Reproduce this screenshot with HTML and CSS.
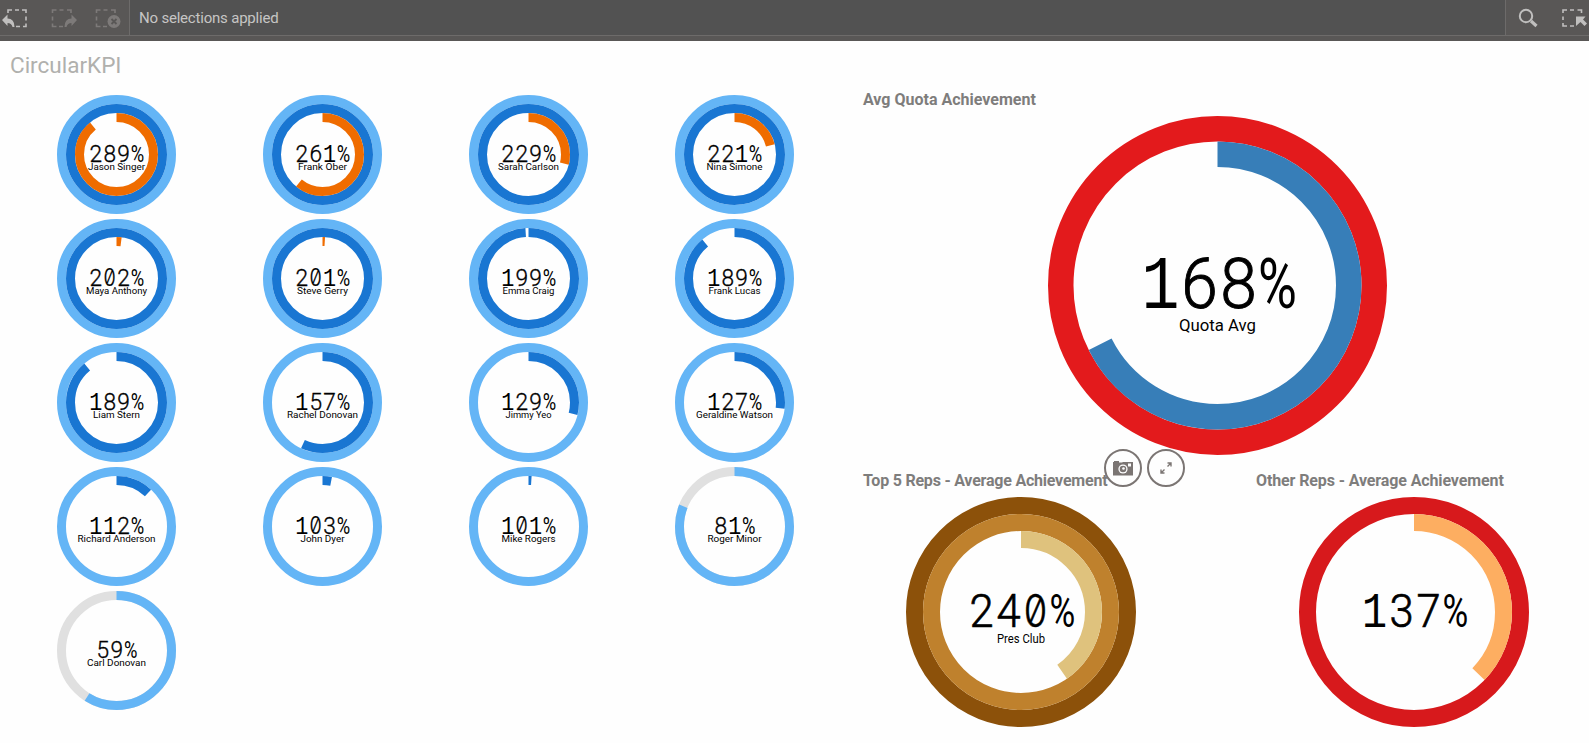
FILE: index.html
```html
<!DOCTYPE html>
<html lang="en">
<head>
<meta charset="utf-8">
<title>CircularKPI</title>
<link rel="stylesheet" href="styles.css">
</head>
<body>
<header class="toolbar">
  <div class="tools tools-left">
    <svg class="tool back" width="26" height="22" viewBox="0 0 26 22"><path class="dash" d="M6 5V2h4M13 2h4M20 2h4v3M24 8.500v4M24 15.500v3h-3M18 18.500h-4"/><path class="fill" d="M0 12l5.500-5.500v4q7 0 7 8.500h-2q-1-4-5-4v3z"/></svg>
    <svg class="tool dim" width="26" height="22" viewBox="0 0 26 22"><path class="dash" d="M1.500 5V2h4M8.500 2h4M16 2h4v3M1.500 8.500v4M1.500 15.500v3h4M8 18.500h4"/><path class="fill" d="M26 12l-5.500-5.500v4q-7 0-7 8.500h2q1-4 5-4v3z"/></svg>
    <svg class="tool dim" width="26" height="22" viewBox="0 0 26 22"><path class="dash" d="M1.500 5V2h4M8.500 2h4M16 2h4v3M1.500 8.500v4M1.500 15.500v3h4M8 18.500h4"/><circle class="fill" cx="19" cy="13.500" r="6.500"/><path class="cross" d="M16.500 11l5 5M21.500 11l-5 5"/></svg>
  </div>
  <div class="selections">No selections applied</div>
  <div class="tools tools-right">
    <svg class="tool" width="20" height="20" viewBox="0 0 20 20"><circle class="lens" cx="8" cy="8" r="6.2"/><path class="handle" d="M13 13l5.5 5"/></svg>
    <svg class="tool" width="25" height="20" viewBox="0 0 25 20"><path class="dash" d="M1 5V2h4M8 2h4M15.500 2h4v3M1 8.500v3.500M1 15v3h4M8 18h4"/><path class="fill" d="M14 8.500h9.500l-2.500 3 4 4-2.500 2.500-4-4-4.500 4z"/></svg>
  </div>
</header>
<h1 class="sheet-title">CircularKPI</h1>
<main class="sheet">
  <section class="reps" id="reps"></section>
  <section class="summary">
    <article class="panel panel-wide"><h2>Avg Quota Achievement</h2><div class="chart" id="avg"></div></article>
    <div class="pair">
      <article class="panel"><h2 class="t-top">Top 5 Reps - Average Achievement</h2><div class="chart" id="top"></div></article>
      <article class="panel"><h2 class="t-other">Other Reps - Average Achievement</h2><div class="chart" id="other"></div></article>
    </div>
    <div class="actions">
      <span class="action"><svg width="20" height="15" viewBox="0 0 20 15"><path class="cam" fill-rule="evenodd" d="M0 1h1V0h5v1.500h3l1-.5h10v13.500H0zM15 2.500v3h3v-3z"/><circle cx="10" cy="8" r="4.600" fill="#fff"/><circle class="cam" cx="10" cy="8" r="3.300"/><circle cx="10.500" cy="7.500" r="1.300" fill="#fff"/></svg></span>
      <span class="action"><svg width="12" height="12" viewBox="0 0 12 12"><path class="arrows" d="M7.500 1H11v3.500M11 1L7.500 4.500M4.500 11H1V7.500M1 11l3.500-3.500"/></svg></span>
    </div>
  </section>
</main>
<script src="kpi.js"></script>
</body>
</html>
```
FILE: styles.css
```css
* { box-sizing: border-box; }
body { margin: 0; width: 1589px; height: 743px; overflow: hidden; background: #fefefe; font-family: Roboto, "Liberation Sans", sans-serif; }
.toolbar { display: flex; height: 41px; background: #595756; border-bottom: 5px solid #595756; }
.tools { display: flex; border-bottom: 1px solid #6d6b6a; }
.tools-left { width: 130px; padding: 8px 0 0 2px; gap: 18px; border-right: 1px solid #6d6b6a; }
.tools-right { width: 84px; padding: 8px 0 0 12px; gap: 24px; border-left: 1px solid #6d6b6a; }
.tool { flex: none; }
.back { margin-right: 4.5px; }
.selections { flex: 1; padding: 9px 0 0 9px; font-size: 15px; line-height: 18px; letter-spacing: -0.2px; color: #c6c5c4; background: #525252; border-bottom: 1px solid #6d6b6a; }
.dash { fill: none; stroke: #c0bfbe; stroke-width: 1.6; }
.fill { fill: #c0bfbe; }
.dim .dash { stroke: #7d7a79; }
.dim .fill { fill: #7d7a79; }
.cross { stroke: #595756; stroke-width: 1.8; }
.lens { fill: none; stroke: #c0bfbe; stroke-width: 2; }
.handle { stroke: #c0bfbe; stroke-width: 3.2; }
.sheet-title { margin: 0; height: 54px; padding: 11px 0 0 10px; font-size: 22.5px; line-height: 27px; font-weight: 400; color: #b0b0ad; }
.sheet { display: flex; }
.reps { display: grid; grid-template-columns: repeat(4, 206px); grid-auto-rows: 119px; row-gap: 5px; padding-left: 13.5px; width: 863px; align-content: start; justify-items: center; }
.summary { position: relative; width: 709px; }
.panel h2 { margin: 0; height: 26px; font-size: 16px; line-height: 19px; font-weight: 700; color: #7e7d7c; white-space: nowrap; }
.panel-wide h2 { margin-top: -5px; }
.chart { display: flex; justify-content: center; }
.pair { display: grid; grid-template-columns: 316px 316px; column-gap: 77px; padding-top: 16px; }
.pair .t-top { letter-spacing: -0.22px; }
.pair .t-other { letter-spacing: -0.12px; }
svg { display: block; }
.kpi text { text-anchor: middle; fill: #000; }
.digit { font-weight: 300; stroke: #000; stroke-width: 0.014em; }
.percent { font-weight: 400; }
.one { font-family: "Liberation Mono", monospace; }
.zero { font-family: Inter, sans-serif; font-feature-settings: "zero"; font-weight: 300; stroke: #000; stroke-width: 0.01em; }
.actions { position: absolute; left: 241px; top: 354px; display: flex; gap: 5px; }
.action { width: 38px; height: 38px; border: 2px solid #7b7573; border-radius: 50%; display: flex; align-items: center; justify-content: center; }
.cam { fill: #7b7573; }
.arrows { fill: none; stroke: #7b7573; stroke-width: 1.4; }
```
FILE: kpi.js
```js
const blues = ['#64b5f6', '#1976d2', '#ef6c00'];

// Font class, size factor and horizontal scale for each kind of character.
function glyph(ch) {
  if (ch === '1') return ['one', 1.06, 0.84];
  if (ch === '0') return ['zero', 0.965, 0.84];
  if (ch === '%') return ['percent', 0.985, 0.76];
  return ['digit', 0.985, 0.94];
}

// Concentric rings: each full turn is 100 percent.
function kpi(value, label, o) {
  const c = o.size / 2;
  let out = '';
  o.colors.forEach((color, i) => {
    const r = c - o.ring * (i + 0.5);
    const part = Math.min(100, value - i * 100);
    if (i === 0 && part < 100) out += `<circle cx="${c}" cy="${c}" r="${r}" fill="none" stroke="#e0e0e0" stroke-width="${o.ring}"/>`;
    if (part <= 0) return;
    const dash = part < 100 ? `pathLength="100" stroke-dasharray="${part} 100" transform="rotate(-90 ${c} ${c})"` : '';
    out += `<circle cx="${c}" cy="${c}" r="${r}" fill="none" stroke="${color}" stroke-width="${o.ring}" ${dash}/>`;
  });
  const chars = [...(Math.round(value) + '%')];
  chars.forEach((ch, i) => {
    const x = c + o.shift + (i - (chars.length - 1) / 2) * o.advance;
    const [cls, size, scale] = glyph(ch);
    out += `<text class="${cls}" font-size="${o.font * size}" transform="translate(${x} ${o.valueY}) scale(${scale} 1)">${ch}</text>`;
  });
  if (label) out += `<text x="${c}" y="${o.labelY}" font-size="${o.labelFont}" textLength="${o.labelWidth}" lengthAdjust="spacingAndGlyphs">${label}</text>`;
  return `<svg class="kpi" width="${o.size}" height="${o.size}" viewBox="0 0 ${o.size} ${o.size}">${out}</svg>`;
}

const reps = [
  [289, 'Jason Singer', 57], [261, 'Frank Ober', 49], [229, 'Sarah Carlson', 61], [221, 'Nina Simone', 56],
  [202, 'Maya Anthony', 61], [201, 'Steve Gerry', 51], [199, 'Emma Craig', 52], [189, 'Frank Lucas', 52],
  [189, 'Liam Stern', 47], [157, 'Rachel Donovan', 71], [129, 'Jimmy Yeo', 46], [127, 'Geraldine Watson', 77],
  [112, 'Richard Anderson', 78], [103, 'John Dyer', 44], [101, 'Mike Rogers', 54], [81, 'Roger Minor', 54],
  [59, 'Carl Donovan', 59]
];
document.getElementById('reps').innerHTML = reps.map(([v, name, w]) => kpi(v, name, {
  size: 119, ring: 9, colors: blues, font: 24.5, advance: 13.9, shift: 0.2, valueY: 66.6, labelY: 75.2, labelFont: 9.3, labelWidth: w
})).join('');
document.getElementById('avg').innerHTML = kpi(167.6, 'Quota Avg', {
  size: 339, ring: 25.5, colors: ['#e31a1c', '#377eb8'], font: 71, advance: 39, shift: 1.5, valueY: 192, labelY: 215, labelFont: 16.5, labelWidth: 77
});
document.getElementById('top').innerHTML = kpi(240.4, 'Pres Club', {
  size: 230, ring: 17, colors: ['#8c510a', '#bf812d', '#dfc27d'], font: 47, advance: 27, shift: 1, valueY: 130, labelY: 146, labelFont: 12, labelWidth: 48
});
document.getElementById('other').innerHTML = kpi(137.2, '', {
  size: 230, ring: 17, colors: ['#d7191c', '#fdae61'], font: 47, advance: 27, shift: 1, valueY: 130
});
```
